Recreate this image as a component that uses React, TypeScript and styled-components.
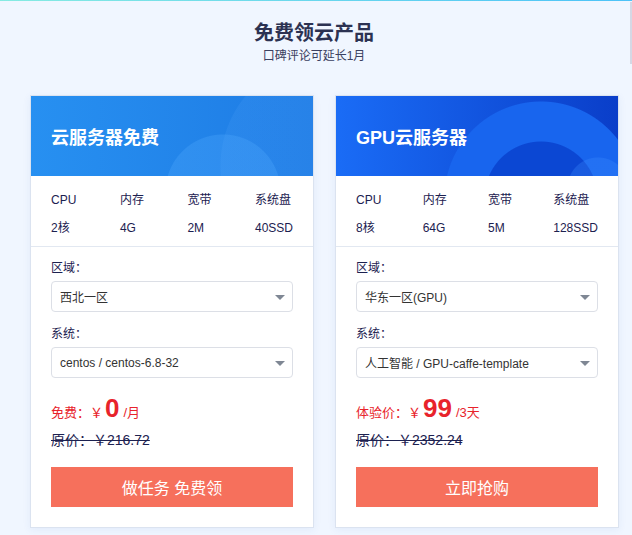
import * as React from 'react';
import styled, { createGlobalStyle } from 'styled-components';

type Spec = { label: string; value: string };

type Product = {
    title: string;
    variant: 'light' | 'deep';
    specs: Spec[];
    region: string;
    system: string;
    priceLabel: string;
    price: string;
    unit: string;
    original: string;
    action: string;
};

const products: Product[] = [
    {
        title: '云服务器免费',
        variant: 'light',
        specs: [
            { label: 'CPU', value: '2核' },
            { label: '内存', value: '4G' },
            { label: '宽带', value: '2M' },
            { label: '系统盘', value: '40SSD' },
        ],
        region: '西北一区',
        system: 'centos / centos-6.8-32',
        priceLabel: '免费：',
        price: '0',
        unit: '/月',
        original: '原价：￥216.72',
        action: '做任务 免费领',
    },
    {
        title: 'GPU云服务器',
        variant: 'deep',
        specs: [
            { label: 'CPU', value: '8核' },
            { label: '内存', value: '64G' },
            { label: '宽带', value: '5M' },
            { label: '系统盘', value: '128SSD' },
        ],
        region: '华东一区(GPU)',
        system: '人工智能 / GPU-caffe-template',
        priceLabel: '体验价：',
        price: '99',
        unit: '/3天',
        original: '原价：￥2352.24',
        action: '立即抢购',
    },
];

const App = () => {
    return (
        <>
            <GlobalStyle />
            <Page>
                <Heading>
                    <Title>免费领云产品</Title>
                    <Subtitle>口碑评论可延长1月</Subtitle>
                </Heading>

                <Cards>
                    {products.map(product =>
                        <Card key={product.title}>
                            <CardHeader variant={product.variant}>
                                {product.title}
                            </CardHeader>

                            <Specs>
                                {product.specs.map(spec =>
                                    <SpecColumn key={spec.label}>
                                        <span>{spec.label}</span>
                                        <span>{spec.value}</span>
                                    </SpecColumn>
                                )}
                            </Specs>

                            <Body>
                                <FieldLabel>区域：</FieldLabel>
                                <Select>
                                    {product.region}
                                    <Caret />
                                </Select>

                                <FieldLabel>系统：</FieldLabel>
                                <Select>
                                    {product.system}
                                    <Caret />
                                </Select>

                                <PriceRow>
                                    {product.priceLabel}￥<Amount>{product.price}</Amount><Unit>{product.unit}</Unit>
                                </PriceRow>
                                <Original>{product.original}</Original>

                                <ActionButton>{product.action}</ActionButton>
                            </Body>
                        </Card>
                    )}
                </Cards>
            </Page>
            <ScrollThumb />
        </>
    )
}

export default App

const GlobalStyle = createGlobalStyle`
  html, body {
    margin: 0;
    padding: 0;
    background: #f0f6ff;
  }
  body {
    font-family: "Liberation Sans", "Noto Sans CJK SC", sans-serif;
    color: #1c2150;
  }
`;

const Page = styled.div`
  min-height: 535px;
  box-sizing: border-box;
  border-top: 1px solid;
  border-image: linear-gradient(90deg, #86ebe2, #4cc2f8) 1;
  padding: 0 0 8px 30px;
`;

const Heading = styled.header`
  width: 568px;
  padding: 20px 0 0;
  text-align: center;
  height: 74px;
  box-sizing: border-box;
`;

const Title = styled.h1`
  margin: 0;
  font-size: 20px;
  line-height: 24px;
  font-weight: bold;
  color: #2c3252;
`;

const Subtitle = styled.p`
  margin: 2px 0 0;
  font-size: 12px;
  line-height: 18px;
  color: #3b4060;
`;

const Cards = styled.div`
  display: flex;
  gap: 21px;
  margin-top: 20px;
`;

const Card = styled.section`
  width: 284px;
  box-sizing: border-box;
  background: #fff;
  border: 1px solid #dbe3f0;
  box-shadow: 0 2px 8px rgba(40, 90, 180, 0.07);
`;

const CardHeader = styled.h2<{ variant: 'light' | 'deep' }>`
  margin: 0;
  height: 80px;
  display: flex;
  align-items: center;
  padding: 0 20px;
  font-size: 18px;
  font-weight: bold;
  color: #fff;
  background: ${p => p.variant === 'light'
        ? `radial-gradient(circle at 192px 96px, rgba(80, 170, 255, 0.3) 0 57px, transparent 58px),
           radial-gradient(circle at 300px 70px, rgba(90, 170, 255, 0.15) 0 110px, transparent 111px),
           linear-gradient(90deg, #2790f1, #1e7be4)`
        : `radial-gradient(circle at 262px 92px, rgba(60, 140, 255, 0.3) 0 30px, transparent 31px),
           radial-gradient(circle at 205px 102px, #0b47d3 0 56px, #1865ee 57px 96px, transparent 97px),
           linear-gradient(90deg, #1a6cf6, #0a3ec9)`};
`;

const Specs = styled.div`
  display: flex;
  justify-content: space-between;
  padding: 10px 20px 4px;
  border-bottom: 1px solid #e2e8f1;
`;

const SpecColumn = styled.div`
  display: flex;
  flex-direction: column;
  font-size: 12px;
  line-height: 28px;
  color: #1c2150;
`;

const Body = styled.div`
  display: flex;
  flex-direction: column;
  padding: 0 20px 20px;
`;

const FieldLabel = styled.div`
  margin: 11px 0 3px;
  font-size: 12px;
  line-height: 20px;
  color: #1c2150;

  & + div + & {
    margin-top: 12px;
  }
`;

const Select = styled.div`
  position: relative;
  height: 31px;
  box-sizing: border-box;
  border: 1px solid #dcdfe6;
  border-radius: 4px;
  padding: 0 28px 0 8px;
  display: flex;
  align-items: center;
  font-size: 12px;
  color: #333;
`;

const Caret = styled.span`
  position: absolute;
  right: 7px;
  top: 13px;
  width: 0;
  height: 0;
  border-left: 5px solid transparent;
  border-right: 5px solid transparent;
  border-top: 5px solid #7f8794;
`;

const PriceRow = styled.div`
  margin-top: 15px;
  height: 30px;
  display: flex;
  align-items: baseline;
  font-size: 13px;
  color: #e8232b;
`;

const Amount = styled.span`
  font-size: 26px;
  font-weight: bold;
  margin: 0 4px 0 2px;
`;

const Unit = styled.span`
  font-size: 13px;
`;

const Original = styled.div`
  margin-top: 7px;
  font-size: 14px;
  line-height: 20px;
  color: #1c2150;
  text-decoration: line-through;
  align-self: flex-start;
`;

const ActionButton = styled.button`
  margin-top: 17px;
  height: 40px;
  border: none;
  background: #f6705c;
  color: #fff;
  font-family: inherit;
  font-size: 16px;
  cursor: pointer;
`;

const ScrollThumb = styled.div`
  position: fixed;
  top: 2px;
  right: 0;
  width: 2px;
  height: 62px;
  background: #d5d8e5;
`;
